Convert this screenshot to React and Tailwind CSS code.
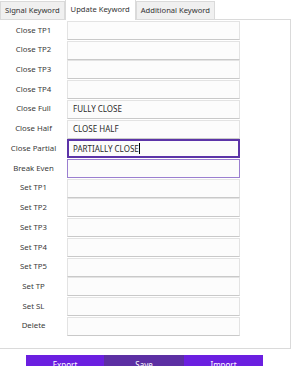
import React, { useState } from 'react';

const rows = [
  { label: 'Close TP1', value: '' },
  { label: 'Close TP2', value: '' },
  { label: 'Close TP3', value: '' },
  { label: 'Close TP4', value: '' },
  { label: 'Close Full', value: 'FULLY CLOSE' },
  { label: 'Close Half', value: 'CLOSE HALF' },
  { label: 'Close Partial', value: 'PARTIALLY CLOSE', focus: true },
  { label: 'Break Even', value: '', hover: true },
  { label: 'Set TP1', value: '' },
  { label: 'Set TP2', value: '' },
  { label: 'Set TP3', value: '' },
  { label: 'Set TP4', value: '' },
  { label: 'Set TP5', value: '' },
  { label: 'Set TP', value: '' },
  { label: 'Set SL', value: '' },
  { label: 'Delete', value: '' },
];

const KeywordRow = ({ label, value, focus, hover }) => {
  let border = 'border border-[#e3e3e3] border-b-[#c9c9c9]';
  if (focus) border = 'border-2 border-[#5c34a8]';
  if (hover) border = 'border border-[#9b7fd0]';
  return (
    <div className="flex items-center h-[19px]">
      <div className="w-[67px] text-center text-[7.8px] text-[#3a3a3a]">{label}</div>
      <div className={`w-[173px] h-full flex items-center bg-[#fcfcfc] ${border} ${focus ? 'px-[4px]' : 'px-[5px]'}`}>
        <span className="text-[8px] text-[#2a2a2a]">{value}</span>
        {focus && <span className="w-px h-[11px] bg-black" />}
      </div>
    </div>
  );
};

const App = () => {
  const [tab] = useState('Update Keyword');
  const tabs = ['Signal Keyword', 'Update Keyword', 'Additional Keyword'];

  return (
    <div className="w-[292px] h-[366px] overflow-hidden bg-white font-['Noto_Sans',sans-serif] text-[8px] leading-none">
      {/* tabs */}
      <div className="flex items-end h-[20px] border-b border-[#dadada] w-[291px] text-[7.6px]">
        {tabs.map(t => (
          t === tab ? (
            <div key={t} className="h-[21px] -mb-px px-[5px] flex items-center bg-white border border-b-0 border-[#dadada] text-[#333]">{t}</div>
          ) : (
            <div key={t} className="h-[18px] px-[4px] flex items-center bg-[#f0f0f0] border border-b-0 border-[#dadada] text-[#333]">{t}</div>
          )
        ))}
      </div>

      {/* panel */}
      <div className="w-[291px] border-r border-b border-[#dadada] pt-px pb-[12px] flex flex-col gap-[0.73px]">
        {rows.map(r => <KeywordRow key={r.label} {...r} />)}
      </div>

      {/* buttons */}
      <div className="flex pl-[26px] mt-[6px] text-[8px]">
        <button className="w-[78px] h-[20px] bg-[#6b1fe0] text-white">Export</button>
        <button className="w-[80px] h-[20px] bg-[#5c2fa3] text-white">Save</button>
        <button className="w-[79px] h-[20px] bg-[#6b1fe0] text-white">Import</button>
      </div>
    </div>
  );
};

export default App;
